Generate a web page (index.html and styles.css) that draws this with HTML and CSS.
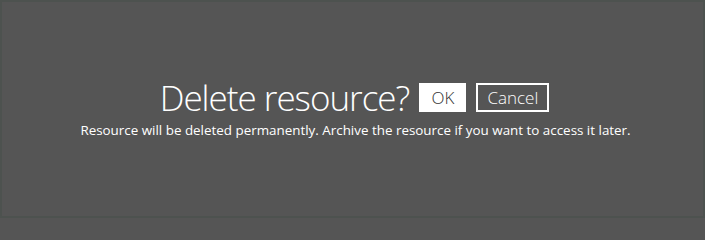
FILE: index.html
```html
<!DOCTYPE html>
<html>
<head>
<meta charset="utf-8">
<link rel="stylesheet" href="styles.css">
</head>
<body>
<div class="screen">
  <div class="dialog">
    <div class="row">
      <h1 class="title">Delete resource?</h1>
      <button class="btn btn-ok">OK</button>
      <button class="btn btn-cancel">Cancel</button>
    </div>
    <p class="msg">Resource will be deleted permanently. Archive the resource if you want to access it later.</p>
  </div>
</div>
</body>
</html>
```
FILE: styles.css
```css
html, body {
  margin: 0;
  padding: 0;
  background: #555555;
}
body {
  width: 705px;
  height: 218px;
  overflow: hidden;
  font-family: "Open Sans", "Noto Sans", sans-serif;
}
.screen {
  box-sizing: border-box;
  width: 705px;
  height: 218px;
  border: 2px solid #4d524f;
  display: flex;
  justify-content: center;
  padding-top: 78px;
}
.dialog {
  display: flex;
  flex-direction: column;
  align-items: center;
}
.row {
  display: flex;
  align-items: flex-start;
  gap: 10px;
  height: 36px;
  padding-left: 2px;
}
.title {
  margin: 0 0 0 2px;
  font-weight: 350;
  font-size: 35px;
  line-height: 36px;
  color: #ffffff;
  letter-spacing: -1px;
}
.btn {
  font-family: inherit;
  font-weight: 300;
  font-size: 17px;
  height: 29px;
  padding: 0;
  margin: 3px 0 0;
  box-sizing: border-box;
  border-radius: 0;
  cursor: pointer;
  line-height: 1;
}
.btn-ok {
  background: #ffffff;
  color: #333333;
  border: 2px solid #ffffff;
  width: 47px;
}
.btn-cancel {
  background: #555555;
  color: #ffffff;
  border: 2px solid #ffffff;
  width: 73px;
}
.msg {
  margin: 5px 0 0;
  padding-left: 6px;
  font-size: 13.4px;
  line-height: 18px;
  color: #ffffff;
}
```
